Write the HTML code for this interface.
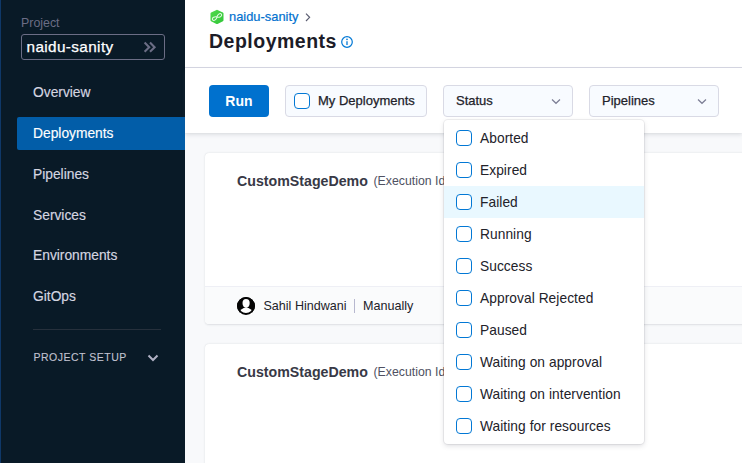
<!DOCTYPE html>
<html><head><meta charset="utf-8">
<style>
*{box-sizing:border-box;margin:0;padding:0}
html,body{width:742px;height:463px;overflow:hidden;font-family:"Liberation Sans",sans-serif;background:#f8f9fb}
.t{position:absolute;white-space:nowrap;line-height:1}
#side{position:absolute;left:0;top:0;width:185px;height:463px;background:#091a27}
#side .edge{position:absolute;left:0;top:0;width:1px;height:463px;background:#0f3868}
.plabel{left:21px;top:17px;font-size:12.4px;color:#6b6d85}
.pbox{position:absolute;left:21px;top:34px;width:144px;height:26px;border:1px solid #6b6d85;border-radius:3px}
.pname{left:26.5px;top:38.7px;font-size:15.3px;color:#fff;-webkit-text-stroke:0.25px #fff;letter-spacing:0.38px}
.nav{left:33px;font-size:13.8px;color:#d5d6e1;-webkit-text-stroke:0.15px #d5d6e1;letter-spacing:0px}
.sel{position:absolute;left:17px;top:117px;width:168px;height:33px;background:#025da8;border-radius:2px 0 0 2px}
.div{position:absolute;left:33px;top:329px;width:128px;height:1px;background:#26303c}
.ps{left:33.5px;top:351.5px;font-size:10.5px;color:#c2c3d1;letter-spacing:0.5px;-webkit-text-stroke:0.1px #c2c3d1}
#hdr{position:absolute;left:185px;top:0;width:557px;height:68px;background:#fff;border-bottom:1px solid #d9dae5}
#tb{position:absolute;left:185px;top:68px;width:557px;height:65px;background:#fff;box-shadow:0 0 1px rgba(40,41,61,.08),0 1.5px 4px rgba(96,97,112,.16)}
.bc{left:229px;top:10.5px;font-size:12.9px;color:#0271cf;-webkit-text-stroke:0.2px #0271cf}
.h1{left:209px;top:32.2px;font-size:19.5px;font-weight:bold;color:#1c1c28;letter-spacing:0.5px}
.btn{position:absolute;top:85px;height:32px;border-radius:4px}
.run{left:209px;width:60px;background:#0071ce}
.runt{left:225.3px;top:93.7px;font-size:14px;font-weight:bold;color:#fff}
.ob{border:1px solid #d9dae5;background:#f8fbff}
.cbx{position:absolute;width:16px;height:16px;border:1.25px solid #0278d5;border-radius:4px;background:#fff}
.tbt{font-size:13px;color:#22222a;top:94.4px;-webkit-text-stroke:0.25px #22222a}
.chev{position:absolute}
.card{position:absolute;left:205px;width:560px;background:#fff;border-radius:4px;box-shadow:0 0 1px rgba(40,41,61,.08),0 0.5px 2px rgba(96,97,112,.16);overflow:hidden}
.foot{position:absolute;left:0;top:133px;width:100%;height:38px;background:#fafbfc;border-top:1px solid #eeeff5}
.cname{font-size:14.2px;font-weight:bold;color:#383946}
.exec{font-size:12.3px;color:#4f5162}
.dd{position:absolute;left:444px;top:120px;width:200px;height:324px;background:#fff;border-radius:4px;box-shadow:0 0 0 1px rgba(40,41,61,.07),0 2px 5px rgba(96,97,112,.2)}
.item{position:absolute;left:0;width:200px;height:32px}
.item .cbx{left:12px;top:8px}
.item span{position:absolute;left:36px;top:10px;font-size:13.75px;letter-spacing:0.06px;color:#22222a;line-height:1;white-space:nowrap}
</style></head><body>
<div id="side">
 <div class="edge"></div>
 <div class="t plabel">Project</div>
 <div class="pbox"></div>
 <div class="t pname">naidu-sanity</div>
 <svg style="position:absolute;left:143px;top:41px" width="14" height="13" viewBox="0 0 14 13"><path d="M1.6 1.6L6.2 6.2L1.6 10.8M7 1.6L11.6 6.2L7 10.8" fill="none" stroke="#6b6d85" stroke-width="2.1"/></svg>
 <div class="sel"></div>
 <div class="t nav" style="top:86.2px">Overview</div>
 <div class="t nav" style="top:127px;color:#fff;-webkit-text-stroke-color:#fff">Deployments</div>
 <div class="t nav" style="top:168.2px">Pipelines</div>
 <div class="t nav" style="top:209.2px">Services</div>
 <div class="t nav" style="top:249.2px">Environments</div>
 <div class="t nav" style="top:290.2px">GitOps</div>
 <div class="div"></div>
 <div class="t ps">PROJECT SETUP</div>
 <svg style="position:absolute;left:147px;top:354px" width="12" height="8" viewBox="0 0 12 8"><path d="M1.5 1.5L6 6L10.5 1.5" fill="none" stroke="#b0b1c4" stroke-width="2"/></svg>
</div>
<div id="hdr"></div>
<div id="tb"></div>
<svg style="position:absolute;left:209px;top:9px" width="16" height="16" viewBox="0 0 16 16"><defs><linearGradient id="g" x1="0" y1="0" x2="1" y2="1"><stop offset="0" stop-color="#4fd84a"/><stop offset="1" stop-color="#33c73a"/></linearGradient></defs><path d="M8 1.9L13.4 4.6V11.2L8 14L2.6 11.2V4.6Z" fill="url(#g)" stroke="url(#g)" stroke-width="2.2" stroke-linejoin="round"/><path d="M8 8C9.2 6.2 13.2 5.7 13.2 8C13.2 10.3 9.2 9.8 8 8C6.8 6.2 2.8 5.7 2.8 8C2.8 10.3 6.8 9.8 8 8Z" transform="rotate(-32 8 8)" fill="none" stroke="#fff" stroke-opacity="0.85" stroke-width="1.1"/></svg>
<div class="t bc">naidu-sanity</div>
<svg style="position:absolute;left:304px;top:12px" width="8" height="11" viewBox="0 0 8 11"><path d="M2 1.6L5.6 5.3L2 9" fill="none" stroke="#5c5e72" stroke-width="1.2"/></svg>
<div class="t h1">Deployments</div>
<svg style="position:absolute;left:341px;top:36px" width="12" height="12" viewBox="0 0 12 12"><circle cx="6" cy="6" r="5.3" fill="none" stroke="#0278d5" stroke-width="1.2"/><circle cx="6" cy="3.4" r="0.8" fill="#0278d5"/><path d="M6 5.2V9" stroke="#0278d5" stroke-width="1.3"/></svg>

<div class="btn run"></div>
<div class="t runt">Run</div>
<div class="btn ob" style="left:285px;width:142px"></div>
<div class="cbx" style="left:294px;top:93px"></div>
<div class="t tbt" style="left:318px">My Deployments</div>
<div class="btn ob" style="left:443px;width:130px"></div>
<div class="t tbt" style="left:456px">Status</div>
<svg class="chev" style="left:551px;top:97.5px" width="10" height="7" viewBox="0 0 10 7"><path d="M1 1.5L5 5.3L9 1.5" fill="none" stroke="#7c7e95" stroke-width="1.2"/></svg>
<div class="btn ob" style="left:589px;width:130px"></div>
<div class="t tbt" style="left:602px">Pipelines</div>
<svg class="chev" style="left:697px;top:97.5px" width="10" height="7" viewBox="0 0 10 7"><path d="M1 1.5L5 5.3L9 1.5" fill="none" stroke="#7c7e95" stroke-width="1.2"/></svg>

<div class="card" style="top:153px;height:171px">
 <div class="t cname" style="left:32px;top:21px">CustomStageDemo</div>
 <div class="t exec" style="left:168.5px;top:21.6px">(Execution Id</div>
 <div class="foot">
  <svg style="position:absolute;left:32px;top:10px" width="18" height="18" viewBox="0 0 18 18"><circle cx="9" cy="9" r="9" fill="#050505"/><ellipse cx="9.1" cy="15.4" rx="6.3" ry="4.6" fill="#fff"/><ellipse cx="9.1" cy="6.1" rx="3.6" ry="4.9" fill="#fff"/><circle cx="9" cy="9" r="8.05" fill="none" stroke="#050505" stroke-width="1.9"/></svg>
  <div class="t" style="left:58.5px;top:12.8px;font-size:12.55px;color:#22222a">Sahil Hindwani</div>
  <div style="position:absolute;left:149px;top:12px;width:1px;height:14px;background:#b7b8cf"></div>
  <div class="t" style="left:158px;top:12.8px;font-size:12.6px;color:#22222a">Manually</div>
 </div>
</div>
<div class="card" style="top:344px;height:171px">
 <div class="t cname" style="left:32px;top:21px">CustomStageDemo</div>
 <div class="t exec" style="left:168.5px;top:21.6px">(Execution Id</div>
</div>
<div class="dd">
 <div class="item" style="top:2px"><div class="cbx"></div><span>Aborted</span></div>
 <div class="item" style="top:34px"><div class="cbx"></div><span>Expired</span></div>
 <div class="item" style="top:66px;background:#e9f8ff"><div class="cbx"></div><span>Failed</span></div>
 <div class="item" style="top:98px"><div class="cbx"></div><span>Running</span></div>
 <div class="item" style="top:130px"><div class="cbx"></div><span>Success</span></div>
 <div class="item" style="top:162px"><div class="cbx"></div><span>Approval Rejected</span></div>
 <div class="item" style="top:194px"><div class="cbx"></div><span>Paused</span></div>
 <div class="item" style="top:226px"><div class="cbx"></div><span>Waiting on approval</span></div>
 <div class="item" style="top:258px"><div class="cbx"></div><span>Waiting on intervention</span></div>
 <div class="item" style="top:290px"><div class="cbx"></div><span>Waiting for resources</span></div>
</div>
</body></html>
